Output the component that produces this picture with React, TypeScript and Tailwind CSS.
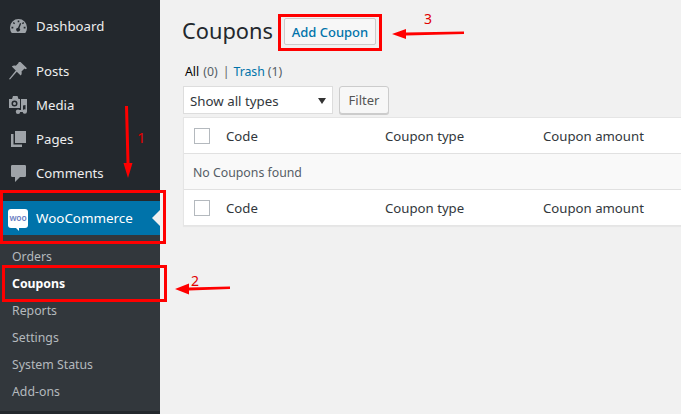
import type { ReactNode } from 'react';

const font = { fontFamily: '"Noto Sans", "Open Sans", sans-serif' };

const submenu = ['Orders', 'Coupons', 'Reports', 'Settings', 'System Status', 'Add-ons'];

function MenuItem({ icon, label, className = '' }: { icon: ReactNode; label: string; className?: string }) {
  return (
    <div className={`flex h-[34px] items-center ${className}`}>
      <div className="flex w-[36px] shrink-0 justify-center">{icon}</div>
      <span className="pt-[2px] text-[13.2px] text-[#eeeeee]">{label}</span>
    </div>
  );
}

const DashboardIcon = (
  <svg width="17" height="14" viewBox="0 0 17 14" fill="#9ea3a8">
    <path fillRule="evenodd" d="M8.500 0A8.500 8.500 0 0 1 17 8.500c0 2-.6 4-1.700 5.500H1.700A9.500 9.500 0 0 1 0 8.500 8.500 8.500 0 0 1 8.500 0zM7.700 1.500v1.800h1.600V1.500H7.700zM3.800 3l-1 1 1.300 1.300 1-1L3.800 3zM13.200 3l-1.300 1.300 1 1L14.200 4l-1-1zM1.500 7.800v1.600h1.800V7.800H1.500zM13.700 7.800v1.600h1.800V7.800h-1.800zM10 4 8 8.800a1.900 1.900 0 1 0 1.400.5L11.200 4.500 10 4z" />
  </svg>
);

const PinIcon = (
  <svg width="18" height="18" viewBox="0 0 18 18" fill="#9ea3a8">
    <path d="M11.500 0 18 6.300l-1.500.9-1-.6-3 3c.5 1.600.2 3-.8 4L7.800 9.700 1 17.600l-1-.5 6.800-8.500-4-4c1-1 2.400-1.200 4-.8l3-3-.4-.9z" />
  </svg>
);

const MediaIcon = (
  <svg width="18" height="18" viewBox="0 0 18 18" fill="#9ea3a8">
    <path fillRule="evenodd" d="M0 3h3l1-3h4.500l1 3H11v9H0V3zm5.500 1.500a3 3 0 1 0 0 6 3 3 0 0 0 0-6z" />
    <circle cx="5.500" cy="7.500" r="1.500" />
    <path d="M12 3h6v12.500h-1.500V9l-2.500.6v6.400h-2V3z" />
    <circle cx="15.800" cy="15.500" r="2.200" />
    <circle cx="9" cy="15.800" r="2.200" />
    <path d="M9.500 14h3v2h-3z" />
  </svg>
);

const PagesIcon = (
  <svg width="15" height="16" viewBox="0 0 15 16" fill="#9ea3a8">
    <path d="M4 0h11v12H4z" />
    <path d="M0 3h2.500v10.500H11V16H0z" />
  </svg>
);

const CommentIcon = (
  <svg width="15" height="17" viewBox="0 0 15 17" fill="#9ea3a8">
    <path d="M1.200 0h12.600A1.200 1.200 0 0 1 15 1.200v9.600a1.200 1.200 0 0 1-1.200 1.200H9l-5 5v-5H1.200A1.200 1.200 0 0 1 0 10.800V1.200A1.200 1.200 0 0 1 1.200 0z" />
  </svg>
);

function Sidebar() {
  return (
    <aside className="flex h-[414px] w-[160px] shrink-0 flex-col bg-[#23282d]">
      <MenuItem icon={DashboardIcon} label="Dashboard" className="mt-[9px]" />
      <MenuItem icon={PinIcon} label="Posts" className="mt-[11px]" />
      <MenuItem icon={MediaIcon} label="Media" />
      <MenuItem icon={PagesIcon} label="Pages" />
      <MenuItem icon={CommentIcon} label="Comments" />
      <div className="relative mt-[11px] flex h-[34px] items-center bg-[#0073aa]">
        <div className="relative ml-[8px] mr-[8px] flex h-[19px] w-[20px] items-center justify-center rounded-[3px] bg-white">
          <span className="text-[8.5px] font-semibold leading-none tracking-[-0.2px] text-[#6d7fc4]">woo</span>
          <div className="absolute bottom-[-3px] left-[8px] h-0 w-0 border-l-[3px] border-t-[3px] border-l-transparent border-t-white" />
        </div>
        <span className="text-[13.4px] text-white">WooCommerce</span>
        <div className="absolute right-0 top-[9px] h-0 w-0 border-y-[8px] border-r-[8px] border-y-transparent border-r-[#f1f1f1]" />
      </div>
      <div className="h-[176px] bg-[#32373c] pt-[9px]">
        {submenu.map((item) => (
          <div
            key={item}
            className={`flex h-[27px] items-center pl-[12px] text-[12.3px] ${
              item === 'Coupons' ? 'font-bold text-white' : 'text-[#b4b9be]'
            }`}
          >
            {item}
          </div>
        ))}
      </div>
    </aside>
  );
}

function Checkbox() {
  return <div className="mt-[2px] h-[16px] w-[16px] border border-[#b4b9be] bg-white" />;
}

function TableRow({ className = '' }: { className?: string }) {
  return (
    <div className={`flex items-center bg-white text-[13.2px] text-[#32373c] ${className}`}>
      <div className="flex w-[201px] shrink-0 items-center pl-[10px]">
        <Checkbox />
        <span className="ml-[16px] pt-[2px]">Code</span>
      </div>
      <span className="w-[158px] shrink-0 pt-[2px]">Coupon type</span>
      <span className="pt-[2px]">Coupon amount</span>
    </div>
  );
}

function Annotations() {
  return (
    <>
      <div className="absolute left-0 top-[190px] h-[54px] w-[166px] border-[3px] border-[#ff0000]" />
      <div className="absolute left-[2px] top-[265px] h-[37px] w-[165px] border-[3px] border-[#ff0000]" />
      <div className="absolute left-[278px] top-[14px] h-[37px] w-[104px] border-[3px] border-[#ff0000]" />
      <svg className="absolute left-0 top-0" width="681" height="414" fill="#ff0000">
        <path d="M125 106h3l1.500 57h3l-4.500 15-4.500-15h3z" />
        <path d="M175 289l14-5.500v4l41-1v2.500l-41 1.500v4z" />
        <path d="M392 34l14-5v3.500l58-1v2.500l-58 1.500v3.500z" />
      </svg>
      <span className="absolute left-[137px] top-[127px] text-[15px] leading-5 text-[#e00000]">1</span>
      <span className="absolute left-[191px] top-[271px] text-[14px] leading-5 text-[#e00000]">2</span>
      <span className="absolute left-[424px] top-[9px] text-[14px] leading-5 text-[#e00000]">3</span>
    </>
  );
}

export default function App() {
  return (
    <div className="relative flex h-[414px] w-[681px] overflow-hidden bg-[#f1f1f1]" style={font}>
      <Sidebar />
      <main className="min-w-0 flex-1 pl-[23px]">
        <div className="flex h-[45px] items-end">
          <h1 className="-ml-[1px] text-[21.8px] leading-[28px] text-[#23282d]">Coupons</h1>
          <button className="ml-[11px] flex h-[27px] w-[92px] items-center justify-center rounded-[2px] border border-[#cccccc] bg-[#f7f7f7] pt-[2px] text-[13px] font-medium text-[#0073aa]">
            Add Coupon
          </button>
        </div>
        <div className="mt-[17px] flex h-[20px] items-center text-[12.3px] text-[#555d66]">
          <span className="ml-[2px] text-black">All</span>
          <span className="ml-[4px]">(0)</span>
          <span className="ml-[5px] mr-[4px] text-[#666666]">|</span>
          <span className="text-[#0073aa]">Trash</span>
          <span className="ml-[3px]">(1)</span>
        </div>
        <div className="mt-[4px] flex items-start">
          <div className="relative flex h-[28px] w-[150px] items-center border border-[#dddddd] bg-white pl-[6px] pt-[3px] text-[13.3px] text-[#32373c]">
            Show all types
            <div className="absolute right-[6px] top-[11px] h-0 w-0 border-x-[4px] border-t-[6px] border-x-transparent border-t-[#333333]" />
          </div>
          <button className="ml-[6px] flex h-[28px] w-[50px] items-center justify-center rounded-[3px] border border-[#cccccc] bg-[#f7f7f7] pt-[1px] text-[13px] text-[#555555] shadow-[0_1px_0_#cccccc]">
            Filter
          </button>
        </div>
        <div className="mt-[3px] border border-r-0 border-[#e5e5e5] shadow-[0_1px_1px_rgba(0,0,0,0.04)]">
          <TableRow className="h-[36px] border-b border-[#e1e1e1]" />
          <div className="flex h-[36px] items-center border-b border-[#e1e1e1] bg-[#f9f9f9] pl-[9px] pt-[3px] text-[12.3px] text-[#555d66]">
            No Coupons found
          </div>
          <TableRow className="h-[35px]" />
        </div>
      </main>
      <Annotations />
    </div>
  );
}
